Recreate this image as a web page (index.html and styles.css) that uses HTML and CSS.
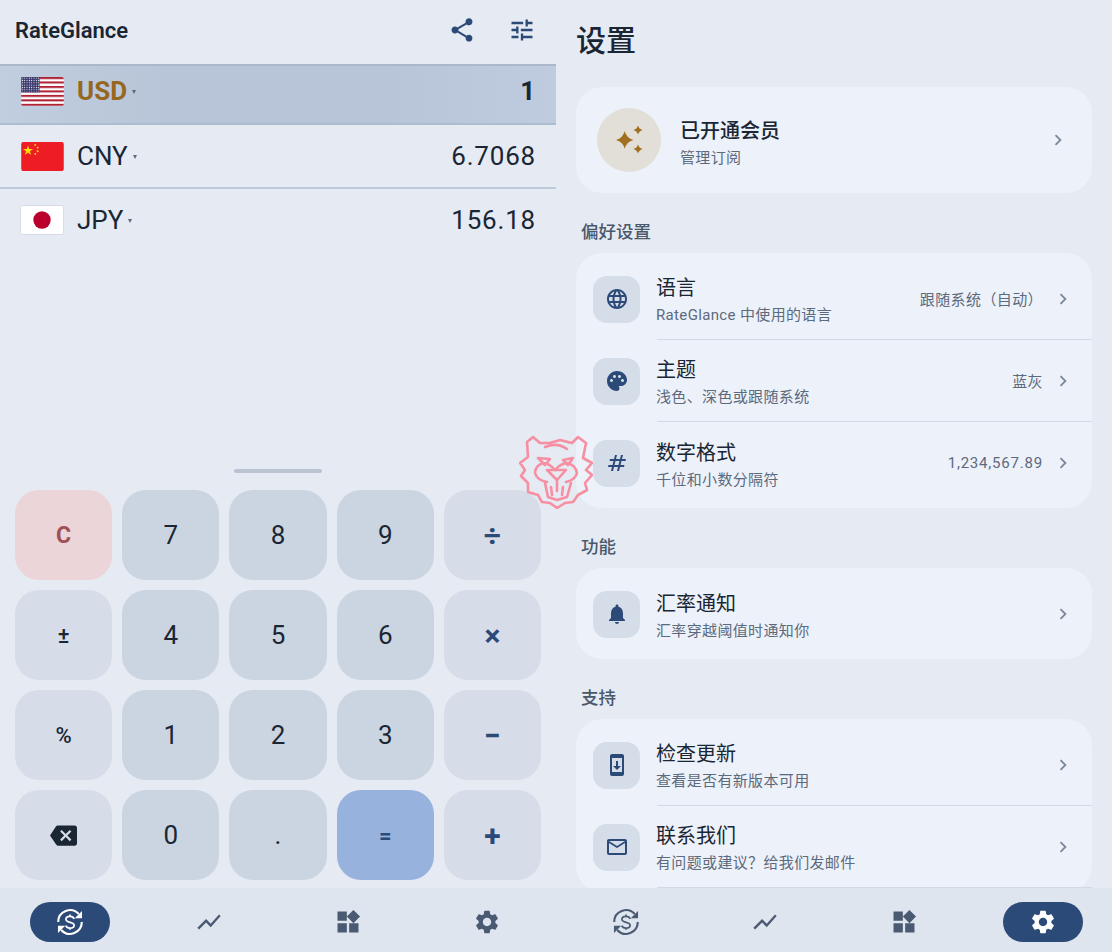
FILE: index.html
```html
<!DOCTYPE html>
<html lang="zh-CN">
<head>
    <meta charset="UTF-8">
    <meta name="viewport" content="width=device-width, initial-scale=1.0">
    <title>RateGlance</title>
    <link rel="stylesheet" href="styles.css">
</head>
<body>
    <svg class="sprite" xmlns="http://www.w3.org/2000/svg">
        <symbol id="i-exchange" viewBox="0 0 24 24">
            <g fill="none" stroke="currentColor" stroke-width="1.800">
                <path d="M1.900 12A10.100 10.100 0 0 1 19.500 5.200"/>
                <path d="M22.100 12A10.100 10.100 0 0 1 4.500 18.800"/>
                <path stroke-width="1.500" d="M15.600 9.300c-.5-1.300-1.800-2.100-3.600-2.100-2 0-3.500 1-3.500 2.500 0 3.500 7 1.700 7 5 0 1.500-1.500 2.500-3.500 2.500-1.800 0-3.100-.8-3.600-2.100M12 5.500v1.700M12 16.900v1.700"/>
            </g>
            <path fill="currentColor" d="M22.300 2.500v6.200h-6.200zM1.700 21.500v-6.200h6.200z"/>
        </symbol>
        <symbol id="i-chart" viewBox="0 0 24 24"><path d="M3.500 18.490l6-6.010 4 4L22 6.920l-1.410-1.410-7.090 7.970-4-4L2 16.990z"/></symbol>
        <symbol id="i-widgets" viewBox="0 0 24 24"><path d="M13 13v8h8v-8h-8zM3 21h8v-8H3v8zM3 3v8h8V3H3zm13.660-1.310L11 7.340 16.660 13l5.660-5.660-5.660-5.650z"/></symbol>
        <symbol id="i-gear" viewBox="0 0 24 24"><path d="M19.140 12.940c.04-.3.06-.61.06-.94 0-.32-.02-.64-.07-.94l2.030-1.580c.18-.14.23-.41.12-.61l-1.920-3.320c-.12-.22-.37-.29-.59-.22l-2.390.96c-.5-.38-1.030-.7-1.620-.94l-.36-2.540c-.04-.24-.24-.41-.48-.41h-3.840c-.24 0-.43.17-.47.41l-.36 2.540c-.59.24-1.130.57-1.620.94l-2.390-.96c-.22-.08-.47 0-.59.22L2.740 8.870c-.12.21-.08.47.12.61l2.030 1.580c-.05.3-.09.63-.09.94s.02.64.07.94l-2.030 1.580c-.18.14-.23.41-.12.61l1.920 3.320c.12.22.37.29.59.22l2.390-.96c.5.38 1.030.7 1.620.94l.36 2.540c.05.24.24.41.48.41h3.840c.24 0 .44-.17.47-.41l.36-2.540c.59-.24 1.130-.56 1.620-.94l2.390.96c.22.08.47 0 .59-.22l1.920-3.320c.12-.22.07-.47-.12-.61l-2.010-1.580zM12 15.600c-1.980 0-3.600-1.620-3.600-3.600s1.620-3.600 3.600-3.600 3.600 1.620 3.600 3.600-1.620 3.600-3.600 3.600z"/></symbol>
        <symbol id="i-chevron" viewBox="0 0 24 24"><path d="M10 6L8.590 7.410 13.170 12l-4.580 4.590L10 18l6-6z"/></symbol>
    </svg>

    <div class="app">
        <!-- converter -->
        <section class="panel">
            <header class="top-bar">
                <div class="app-name">RateGlance</div>
                <div class="top-actions">
                    <svg class="top-icon" viewBox="0 0 24 24"><path d="M18 16.080c-.76 0-1.440.3-1.960.77L8.910 12.700c.05-.23.09-.46.09-.7s-.04-.47-.09-.7l7.050-4.110c.54.5 1.250.81 2.040.81 1.660 0 3-1.340 3-3s-1.340-3-3-3-3 1.340-3 3c0 .24.04.47.09.7L8.040 9.810C7.500 9.310 6.790 9 6 9c-1.660 0-3 1.340-3 3s1.340 3 3 3c.79 0 1.500-.31 2.040-.81l7.120 4.160c-.05.21-.08.43-.08.65 0 1.610 1.310 2.920 2.920 2.920s2.920-1.310 2.920-2.920-1.310-2.920-2.920-2.920z"/></svg>
                    <svg class="top-icon" viewBox="0 0 24 24"><path d="M3 17v2h6v-2H3zM3 5v2h10V5H3zm10 16v-2h8v-2h-8v-2h-2v6h2zM7 9v2H3v2h4v2h2V9H7zm14 4v-2H11v2h10zm-6-4h2V7h4V5h-4V3h-2v6z"/></svg>
                </div>
            </header>

            <div class="currency-list">
                <div class="currency-row active">
                    <svg class="flag" viewBox="0 0 44 30">
                        <defs>
                            <pattern id="us-stripes" width="44" height="4.620" patternUnits="userSpaceOnUse">
                                <rect width="44" height="2.310" fill="#b22234"/>
                                <rect y="2.310" width="44" height="2.310" fill="#fff"/>
                            </pattern>
                            <pattern id="us-stars" width="2.400" height="2.400" patternUnits="userSpaceOnUse">
                                <circle cx="1.200" cy="1.200" r=".55" fill="#fff"/>
                            </pattern>
                        </defs>
                        <rect width="44" height="30" rx="2" fill="url(#us-stripes)"/>
                        <rect width="19" height="16" fill="#3c3b6e"/>
                        <rect width="19" height="16" fill="url(#us-stars)"/>
                    </svg>
                    <span class="code">USD</span><span class="caret"></span>
                    <span class="amount">1</span>
                </div>
                <div class="currency-row">
                    <svg class="flag" viewBox="0 0 44 30">
                        <rect width="44" height="30" rx="2" fill="#ee1c25"/>
                        <polygon fill="#ffde00" points="7,3.500 8.300,7.200 12.200,7.200 9,9.500 10.200,13.200 7,11 3.800,13.200 5,9.500 1.800,7.200 5.700,7.200"/>
                        <circle cx="14.500" cy="3" r="1" fill="#ffde00"/>
                        <circle cx="17" cy="5.800" r="1" fill="#ffde00"/>
                        <circle cx="17" cy="9.500" r="1" fill="#ffde00"/>
                        <circle cx="14.500" cy="12.300" r="1" fill="#ffde00"/>
                    </svg>
                    <span class="code">CNY</span><span class="caret"></span>
                    <span class="amount">6.7068</span>
                </div>
                <div class="currency-row plain">
                    <svg class="flag flag-jp" viewBox="0 0 44 30">
                        <rect x=".5" y=".5" width="43" height="29" rx="2" fill="#fff" stroke="#d5dce8"/>
                        <circle cx="22" cy="15" r="8.700" fill="#bc002d"/>
                    </svg>
                    <span class="code">JPY</span><span class="caret"></span>
                    <span class="amount">156.18</span>
                </div>
            </div>

            <div class="drag-handle"></div>

            <div class="keypad">
                <div class="key key-clear">C</div>
                <div class="key key-num">7</div>
                <div class="key key-num">8</div>
                <div class="key key-num">9</div>
                <div class="key key-op">÷</div>
                <div class="key key-op key-small">±</div>
                <div class="key key-num">4</div>
                <div class="key key-num">5</div>
                <div class="key key-num">6</div>
                <div class="key key-op">×</div>
                <div class="key key-op key-small">%</div>
                <div class="key key-num">1</div>
                <div class="key key-num">2</div>
                <div class="key key-num">3</div>
                <div class="key key-op">−</div>
                <div class="key key-op">
                    <svg class="backspace" viewBox="0 0 24 24"><path d="M22 3H7c-.69 0-1.230.35-1.590.88L0 12l5.410 8.110c.36.53.9.89 1.590.89h15c1.100 0 2-.9 2-2V5c0-1.100-.9-2-2-2zm-3 12.590L17.590 17 14 13.410 10.410 17 9 15.590 12.590 12 9 8.410 10.410 7 14 10.590 17.590 7 19 8.410 15.410 12 19 15.590z"/></svg>
                </div>
                <div class="key key-num">0</div>
                <div class="key key-num">.</div>
                <div class="key key-equals">=</div>
                <div class="key key-op">+</div>
            </div>

            <nav class="bottom-nav">
                <div class="nav-item selected"><svg class="nav-icon"><use href="#i-exchange"/></svg></div>
                <div class="nav-item"><svg class="nav-icon"><use href="#i-chart"/></svg></div>
                <div class="nav-item"><svg class="nav-icon"><use href="#i-widgets"/></svg></div>
                <div class="nav-item"><svg class="nav-icon"><use href="#i-gear"/></svg></div>
            </nav>
        </section>

        <!-- settings -->
        <section class="panel">
            <div class="settings">
                <h1 class="settings-title">设置</h1>

                <div class="card member-card">
                    <div class="member-badge">
                        <svg class="member-stars" viewBox="0 0 32 32">
                            <path d="M11.700 7.300Q13.600 14.100 20.400 16 13.600 17.900 11.700 24.700 9.800 17.900 3 16 9.800 14.100 11.700 7.300z"/>
                            <path d="M25 1.500Q26 5 29.500 6 26 7 25 10.500 24 7 20.500 6 24 5 25 1.500z"/>
                            <path d="M25 20.500Q26 24 29.500 25 26 26 25 29.500 24 26 20.500 25 24 24 25 20.500z"/>
                        </svg>
                    </div>
                    <div class="member-text">
                        <div class="member-name">已开通会员</div>
                        <div class="setting-sub member-sub">管理订阅</div>
                    </div>
                    <svg class="chevron"><use href="#i-chevron"/></svg>
                </div>

                <h2 class="section-label">偏好设置</h2>
                <div class="card">
                    <div class="setting-row">
                        <div class="icon-box"><svg class="box-icon" viewBox="0 0 24 24"><path d="M11.990 2C6.470 2 2 6.480 2 12s4.470 10 9.990 10C17.520 22 22 17.520 22 12S17.520 2 11.990 2zm6.930 6h-2.950c-.32-1.250-.78-2.450-1.380-3.560 1.840.63 3.370 1.910 4.330 3.560zM12 4.040c.83 1.200 1.480 2.530 1.910 3.960h-3.820c.43-1.430 1.080-2.760 1.910-3.960zM4.260 14C4.100 13.360 4 12.690 4 12s.1-1.360.26-2h3.380c-.08.66-.14 1.320-.14 2 0 .68.06 1.340.14 2H4.260zm.82 2h2.950c.32 1.250.78 2.450 1.380 3.560-1.840-.63-3.370-1.900-4.330-3.560zm2.950-8H5.080c.96-1.660 2.490-2.930 4.330-3.560C8.810 5.550 8.350 6.750 8.030 8zM12 19.960c-.83-1.200-1.480-2.530-1.910-3.960h3.820c-.43 1.430-1.080 2.760-1.910 3.960zM14.340 14H9.660c-.09-.66-.16-1.320-.16-2 0-.68.07-1.350.16-2h4.680c.09.650.16 1.320.16 2 0 .68-.07 1.340-.16 2zm.25 5.560c.6-1.110 1.060-2.310 1.380-3.560h2.950c-.96 1.650-2.490 2.930-4.330 3.560zM16.360 14c.08-.66.14-1.320.14-2 0-.68-.06-1.340-.14-2h3.380c.16.64.26 1.310.26 2s-.1 1.360-.26 2h-3.380z"/></svg></div>
                        <div class="setting-body">
                            <div class="setting-text">
                                <div class="setting-name">语言</div>
                                <div class="setting-sub">RateGlance 中使用的语言</div>
                            </div>
                            <div class="setting-value">跟随系统（自动）</div>
                            <svg class="chevron"><use href="#i-chevron"/></svg>
                        </div>
                    </div>
                    <div class="setting-row">
                        <div class="icon-box"><svg class="box-icon" viewBox="0 0 24 24"><path d="M12 2C6.490 2 2 6.490 2 12s4.490 10 10 10c1.380 0 2.500-1.120 2.500-2.500 0-.61-.23-1.200-.64-1.670-.08-.1-.13-.21-.13-.33 0-.28.22-.5.5-.5H16c3.310 0 6-2.690 6-6 0-4.960-4.490-9-10-9zm5.500 11c-.83 0-1.500-.67-1.500-1.500s.67-1.500 1.500-1.500 1.500.67 1.500 1.500-.67 1.500-1.500 1.500zm-3-4c-.83 0-1.500-.67-1.500-1.500S13.670 6 14.500 6s1.500.67 1.500 1.500S15.330 9 14.500 9zM5 11.500c0-.83.67-1.500 1.500-1.500s1.500.67 1.500 1.500S7.330 13 6.500 13 5 12.330 5 11.500zm6-4c0 .83-.67 1.500-1.500 1.500S8 8.330 8 7.500 8.670 6 9.500 6s1.500.67 1.500 1.500z"/></svg></div>
                        <div class="setting-body">
                            <div class="setting-text">
                                <div class="setting-name">主题</div>
                                <div class="setting-sub">浅色、深色或跟随系统</div>
                            </div>
                            <div class="setting-value">蓝灰</div>
                            <svg class="chevron"><use href="#i-chevron"/></svg>
                        </div>
                    </div>
                    <div class="setting-row">
                        <div class="icon-box"><svg class="box-icon" viewBox="0 0 24 24"><path d="M20.500 10l.5-2h-4l1-4h-2l-1 4h-4l1-4h-2L9 8H5l-.5 2h4l-1 4h-4L3 16h4l-1 4h2l1-4h4l-1 4h2l1-4h4l.5-2h-4l1-4h4zm-7 4h-4l1-4h4l-1 4z"/></svg></div>
                        <div class="setting-body last">
                            <div class="setting-text">
                                <div class="setting-name">数字格式</div>
                                <div class="setting-sub">千位和小数分隔符</div>
                            </div>
                            <div class="setting-value value-number">1,234,567.89</div>
                            <svg class="chevron"><use href="#i-chevron"/></svg>
                        </div>
                    </div>
                </div>

                <h2 class="section-label">功能</h2>
                <div class="card">
                    <div class="setting-row">
                        <div class="icon-box"><svg class="box-icon" viewBox="0 0 24 24"><path d="M12 22c1.100 0 2-.9 2-2h-4c0 1.100.89 2 2 2zm6-6v-5c0-3.070-1.640-5.640-4.500-6.320V4c0-.83-.67-1.500-1.500-1.500s-1.500.67-1.500 1.500v.68C7.630 5.360 6 7.920 6 11v5l-2 2v1h16v-1l-2-2z"/></svg></div>
                        <div class="setting-body last">
                            <div class="setting-text">
                                <div class="setting-name">汇率通知</div>
                                <div class="setting-sub">汇率穿越阈值时通知你</div>
                            </div>
                            <svg class="chevron"><use href="#i-chevron"/></svg>
                        </div>
                    </div>
                </div>

                <h2 class="section-label">支持</h2>
                <div class="card">
                    <div class="setting-row">
                        <div class="icon-box"><svg class="box-icon" viewBox="0 0 24 24"><path d="M17 1.010L7 1c-1.100 0-2 .9-2 2v18c0 1.100.9 2 2 2h10c1.100 0 2-.9 2-2V3c0-1.100-.9-1.990-2-1.990zM17 19H7V5h10v14zm-1-6h-3V8h-2v5H8l4 4 4-4z"/></svg></div>
                        <div class="setting-body">
                            <div class="setting-text">
                                <div class="setting-name">检查更新</div>
                                <div class="setting-sub">查看是否有新版本可用</div>
                            </div>
                            <svg class="chevron"><use href="#i-chevron"/></svg>
                        </div>
                    </div>
                    <div class="setting-row">
                        <div class="icon-box"><svg class="box-icon" viewBox="0 0 24 24"><path d="M22 6c0-1.100-.9-2-2-2H4c-1.100 0-2 .9-2 2v12c0 1.100.9 2 2 2h16c1.100 0 2-.9 2-2V6zm-2 0l-8 5-8-5h16zm0 12H4V8l8 5 8-5v10z"/></svg></div>
                        <div class="setting-body">
                            <div class="setting-text">
                                <div class="setting-name">联系我们</div>
                                <div class="setting-sub">有问题或建议？给我们发邮件</div>
                            </div>
                            <svg class="chevron"><use href="#i-chevron"/></svg>
                        </div>
                    </div>
                </div>
            </div>

            <nav class="bottom-nav">
                <div class="nav-item"><svg class="nav-icon"><use href="#i-exchange"/></svg></div>
                <div class="nav-item"><svg class="nav-icon"><use href="#i-chart"/></svg></div>
                <div class="nav-item"><svg class="nav-icon"><use href="#i-widgets"/></svg></div>
                <div class="nav-item selected"><svg class="nav-icon"><use href="#i-gear"/></svg></div>
            </nav>
        </section>

        <!-- watermark sitting over the seam between the two panels -->
        <svg class="mascot" viewBox="0 0 74 74">
            <g fill="none" stroke="#f78fa3" stroke-width="2.600" stroke-linejoin="round" stroke-linecap="round">
                <path d="M14 2L8 7 9 22 1 28 6 35 2 41 9 48 9 57 19 60 23 67 31 68 38 73 46 68 54 67 59 60 68 55 66 48 73 40 67 35 73 28 64 23 67 8 59 2 53 8 41 5 31 8 21 8z"/>
                <path d="M26 12Q38 7 48 14"/>
                <path d="M19 23L31 24 26 30zM54 23L44 25 49 30z"/>
                <path d="M36 35Q30 28 24 28 16 31 16 38 18 45 28 47M36 35Q42 28 49 28 57 31 58 38 56 45 47 47"/>
                <path d="M28 35H47L38 45z"/>
                <path d="M26 48L29 62 38 65 48 62 52 48M38 45V56M32 52L33 60M44 52L43 60"/>
            </g>
        </svg>
    </div>
</body>
</html>
```

FILE: styles.css
```css
:root {
    --bg: #e5eaf3;
    --card: #edf1f9;
    --nav-bg: #dee5ef;
    --ink: #1a2633;
    --ink-soft: #5c6a7e;
    --blue: #2c4a78;
    --slate: #4a5a72;
    --line: #d0d9e6;
    --key-num: #cbd5e1;
    --key-op: #d6dde8;
}

* {
    margin: 0;
    padding: 0;
    box-sizing: border-box;
}

body {
    font-family: Roboto, "Noto Sans CJK SC", sans-serif;
    background-color: var(--bg);
    color: var(--ink);
}

.sprite {
    display: none;
}

.app {
    position: relative;
    display: flex;
    width: 1112px;
    height: 952px;
    overflow: hidden;
}

.panel {
    display: flex;
    flex-direction: column;
    width: 556px;
    height: 952px;
}

/* converter */
.top-bar {
    display: flex;
    justify-content: space-between;
    align-items: center;
    height: 64px;
    padding: 0 20px 4px 15px;
}

.app-name {
    font-size: 22px;
    font-weight: 600;
}

.top-actions {
    display: flex;
    gap: 32px;
}

.top-icon {
    width: 28px;
    height: 28px;
    fill: var(--blue);
}

.currency-list {
    flex: 1;
}

.currency-row {
    display: flex;
    align-items: center;
    height: 64px;
    padding: 0 20px;
    border-bottom: 2px solid #bccadc;
}

.currency-row.active {
    height: 61px;
    padding-bottom: 7px;
    background: linear-gradient(90deg, #c1cee0, #b8c5d8 30%, #b8c5d8 70%, #bfcbde);
    border-top: 2px solid #a9b8cb;
    border-bottom-color: #adbccf;
}

.currency-row.plain {
    border-bottom: 0;
    padding-bottom: 3px;
}

.flag {
    width: 43px;
    height: 29px;
    margin: 0 13px 0 1px;
}

.flag-jp {
    width: 44px;
    height: 30px;
    margin-left: 0;
}

.code {
    font-size: 26px;
}

.active .code {
    font-weight: 700;
    color: #96671f;
}

.caret {
    width: 0;
    height: 0;
    margin: 2px 0 0 5px;
    border-left: 2.500px solid transparent;
    border-right: 2.500px solid transparent;
    border-top: 4px solid #5c6a7e;
}

.amount {
    margin-left: auto;
    font-size: 26px;
    letter-spacing: 0.800px;
}

.active .amount {
    font-weight: 700;
}

.drag-handle {
    width: 88px;
    height: 4px;
    margin: 0 auto 17px;
    border-radius: 2px;
    background-color: #b9c3d1;
}

.keypad {
    display: grid;
    grid-template-columns: repeat(5, 1fr);
    grid-auto-rows: 90px;
    gap: 10px;
    padding: 0 15px 8px;
}

.key {
    display: flex;
    justify-content: center;
    align-items: center;
    border-radius: 24px;
    font-size: 26px;
}

.key-num {
    background-color: var(--key-num);
}

.key-op {
    background-color: var(--key-op);
    color: var(--blue);
    font-size: 30px;
    font-weight: 700;
}

.key-small {
    font-size: 22px;
    font-weight: 500;
    color: var(--ink);
}

.key-clear {
    background-color: #ebd5d9;
    color: #a04f57;
    font-size: 23px;
    font-weight: 700;
}

.key-equals {
    background-color: #98b2de;
    color: var(--blue);
    font-size: 22px;
    font-weight: 700;
}

.backspace {
    width: 27px;
    height: 27px;
    fill: var(--ink);
}

.bottom-nav {
    display: grid;
    grid-template-columns: repeat(4, 1fr);
    flex: none;
    height: 64px;
    padding-top: 14px;
    background-color: var(--nav-bg);
}

.nav-item {
    display: flex;
    justify-content: center;
    align-items: center;
    justify-self: center;
    width: 80px;
    height: 40px;
    border-radius: 20px;
    color: var(--slate);
}

.nav-item.selected {
    background-color: var(--blue);
    color: #fff;
}

.nav-icon {
    width: 28px;
    height: 28px;
    fill: currentColor;
}

/* settings */
.settings {
    flex: 1;
    min-height: 0;
    overflow: hidden;
    padding: 0 20px;
}

.settings-title {
    height: 87px;
    padding-top: 19px;
    font-size: 30px;
    line-height: 44px;
    font-weight: 500;
}

.card {
    padding: 5px 0 4px;
    border-radius: 26px;
    background-color: var(--card);
}

.member-card {
    display: flex;
    align-items: center;
    height: 106px;
    padding: 0 23px 0 21px;
}

.member-badge {
    display: flex;
    justify-content: center;
    align-items: center;
    width: 64px;
    height: 64px;
    margin-right: 19px;
    border-radius: 50%;
    background-color: #e2dfd8;
}

.member-stars {
    width: 32px;
    height: 32px;
    fill: #a06f20;
}

.member-text {
    flex: 1;
    padding-top: 4px;
}

.member-name {
    font-size: 20px;
    line-height: 28px;
    font-weight: 500;
}

.member-sub {
    margin-top: 6px;
}

.section-label {
    height: 60px;
    padding: 28px 0 0 5px;
    font-size: 17.500px;
    line-height: 22px;
    font-weight: 500;
    color: #4a586c;
}

.setting-row {
    display: flex;
    align-items: stretch;
    height: 82px;
    padding-left: 17px;
}

.icon-box {
    display: flex;
    justify-content: center;
    align-items: center;
    align-self: center;
    flex: none;
    width: 47px;
    height: 47px;
    border-radius: 14px;
    background-color: #d5dde8;
}

.box-icon {
    width: 24px;
    height: 24px;
    fill: var(--blue);
}

.setting-body {
    display: flex;
    align-items: center;
    flex: 1;
    margin-left: 17px;
    padding-right: 18px;
    border-bottom: 1px solid var(--line);
}

.setting-body.last {
    border-bottom: 0;
}

.setting-text {
    flex: 1;
    margin-left: -1px;
    padding-top: 2px;
}

.setting-name {
    font-size: 20px;
    line-height: 28px;
}

.setting-sub {
    margin-top: 3px;
    font-size: 15px;
    line-height: 20px;
    letter-spacing: 0.350px;
    color: var(--ink-soft);
}

.setting-value {
    margin-right: 9px;
    font-size: 15px;
    letter-spacing: 0.400px;
    color: var(--ink-soft);
}

.value-number {
    letter-spacing: 0.800px;
}

.chevron {
    flex: none;
    width: 22px;
    height: 22px;
    fill: #7b879b;
}

.mascot {
    position: absolute;
    left: 519px;
    top: 435px;
    width: 74px;
    height: 74px;
}
```
